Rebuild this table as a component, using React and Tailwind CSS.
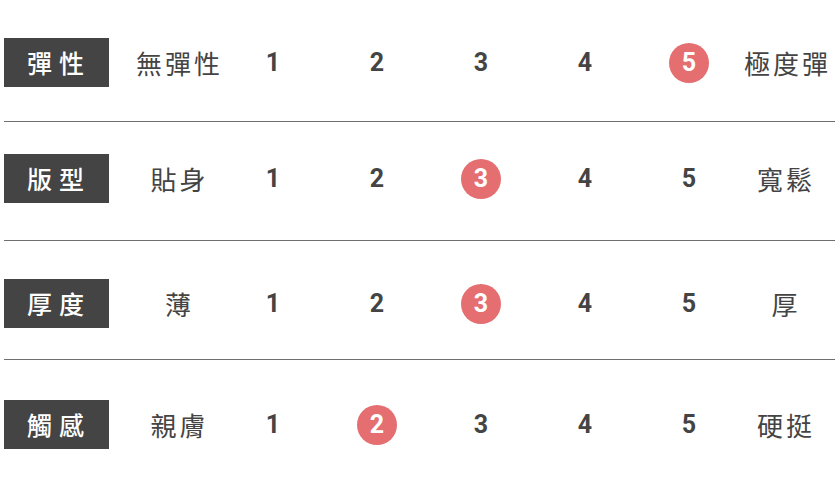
import React from 'react';

const rows = [
  { label: '彈性', left: '無彈性', right: '極度彈', value: 5, pad: 'pt-[38px] pb-[34px] border-b' },
  { label: '版型', left: '貼身', right: '寬鬆', value: 3, pad: 'pt-[32px] pb-[37px] border-b' },
  { label: '厚度', left: '薄', right: '厚', value: 3, pad: 'pt-[38px] pb-[31px] border-b' },
  { label: '觸感', left: '親膚', right: '硬挺', value: 2, pad: 'pt-[40px]' },
];

const cjk = { fontFamily: '"Noto Sans CJK TC", "Noto Sans", sans-serif' };

const Row = ({ row }) => (
  <div className={`flex items-center border-[#6f6f6f] ${row.pad}`}>
    <div
      className="w-[105px] h-[49px] shrink-0 bg-[#444444] flex items-center justify-center text-white text-[25px] font-medium tracking-[7px] pl-[5px]"
      style={cjk}
    >
      {row.label}
    </div>
    <div className="w-[112px] shrink-0 pl-[26px] flex justify-center whitespace-nowrap text-[26px] tracking-[3px] text-[#444]" style={cjk}>
      <span className="pl-[3px]">{row.left}</span>
    </div>
    {[1, 2, 3, 4, 5].map(n => (
      <div key={n} className="w-[104px] shrink-0 flex justify-center">
        {n === row.value ? (
          <span className="w-[40px] h-[40px] rounded-full bg-[#e46e70] text-white flex items-center justify-center text-[25px] font-bold font-['Roboto',sans-serif]">
            {n}
          </span>
        ) : (
          <span className="text-[25px] font-bold text-[#444] font-['Roboto',sans-serif] leading-[40px]">
            {n}
          </span>
        )}
      </div>
    ))}
    <div className="flex-1 pr-[7px] flex justify-center whitespace-nowrap text-[26px] tracking-[3px] text-[#444]" style={cjk}>
      <span className="pl-[3px]">{row.right}</span>
    </div>
  </div>
);

export default function App() {
  return (
    <div className="w-[840px] h-[489px] bg-white overflow-hidden">
      <div className="pl-[4px] pr-[5px]">
        {rows.map(row => (
          <Row key={row.label} row={row} />
        ))}
      </div>
    </div>
  );
}
